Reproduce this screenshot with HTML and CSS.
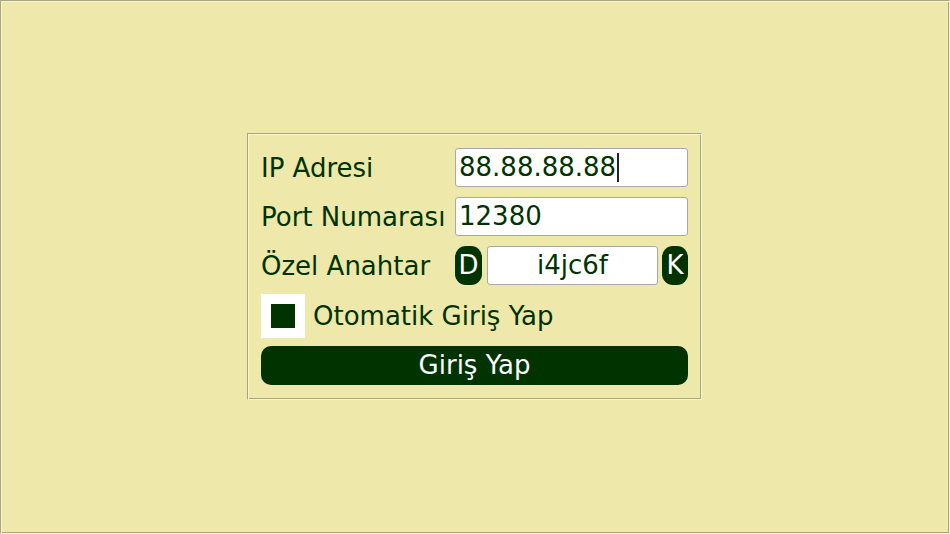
FILE: index.html
```html
<!DOCTYPE html>
<html lang="tr">
<head>
<meta charset="utf-8">
<title>Giriş</title>
<link rel="stylesheet" href="styles.css">
</head>
<body>
<div class="page">
  <form class="panel">
    <div class="row">
      <label class="label">IP Adresi</label>
      <div class="field" role="textbox">88.88.88.88<span class="caret"></span></div>
    </div>
    <div class="row">
      <label class="label">Port Numarası</label>
      <div class="field" role="textbox">12380</div>
    </div>
    <div class="row">
      <label class="label">Özel Anahtar</label>
      <div class="keybox">
        <span class="keybtn">D</span>
        <div class="field center" role="textbox">i4jc6f</div>
        <span class="keybtn">K</span>
      </div>
    </div>
    <div class="check-row">
      <span class="checkbox"><span class="check-mark"></span></span>
      <span class="check-label">Otomatik Giriş Yap</span>
    </div>
    <div class="submit">Giriş Yap</div>
  </form>
</div>
</body>
</html>
```
FILE: styles.css
```css
html, body {
  margin: 0;
  padding: 0;
}
body {
  background: #eee8aa;
  font-family: "DejaVu Sans", Verdana, sans-serif;
  color: #003300;
}
.page {
  width: 950px;
  height: 534px;
  box-sizing: border-box;
  padding: 0 1px 2px 0;
  border: 1px solid;
  border-color: #aaa67c #f9f5d2 #f9f5d2 #aaa67c;
  box-shadow: inset 1px 1px 0 #f9f5d2, inset -1px -1px 0 #aaa67c;
  display: flex;
  align-items: center;
  justify-content: center;
}
.panel {
  width: 427px;
  padding: 14px 13px 14px 13px;
  border: 1px solid;
  border-color: #aaa67c #f9f5d2 #f9f5d2 #aaa67c;
  box-shadow: inset 1px 1px 0 #f9f5d2, inset -1px -1px 0 #aaa67c;
  margin: 0;
  display: flex;
  flex-direction: column;
}
.row {
  display: grid;
  grid-template-columns: 194px 233px;
  height: 39px;
  align-items: center;
  margin-bottom: 10px;
}
.row:nth-child(3) {
  margin-bottom: 9px;
}
.label {
  font-size: 26px;
  line-height: 30px;
  white-space: nowrap;
  padding-top: 1px;
}
.field {
  height: 39px;
  box-sizing: border-box;
  background: #fff;
  border: 1px solid #a8a8a8;
  border-radius: 3px;
  padding: 0 3px;
  font-size: 26px;
  line-height: 37px;
  display: flex;
  align-items: center;
  white-space: nowrap;
}
.field.center {
  justify-content: center;
  width: 171px;
}
.caret {
  display: inline-block;
  width: 2px;
  height: 29px;
  background: #222;
  margin-left: 1px;
}
.keybox {
  display: flex;
  align-items: center;
  height: 39px;
}
.keybtn {
  height: 39px;
  background: #003300;
  color: #fff;
  border-radius: 11px;
  font-size: 26px;
  line-height: 39px;
  display: flex;
  align-items: center;
  justify-content: center;
}
.keybtn:first-child {
  width: 27px;
  margin-right: 5px;
}
.keybtn:last-child {
  width: 26px;
  margin-left: 4px;
}
.check-row {
  display: flex;
  align-items: center;
  height: 44px;
  margin-bottom: 8px;
}
.checkbox {
  width: 44px;
  height: 44px;
  background: #fff;
  display: flex;
  align-items: center;
  justify-content: center;
  margin-right: 8px;
}
.check-mark {
  width: 24px;
  height: 24px;
  background: #003300;
}
.check-label {
  font-size: 26px;
  line-height: 30px;
}
.submit {
  height: 39px;
  background: #003300;
  color: #fff;
  border-radius: 10px;
  font-size: 26px;
  line-height: 39px;
  text-align: center;
}
```
